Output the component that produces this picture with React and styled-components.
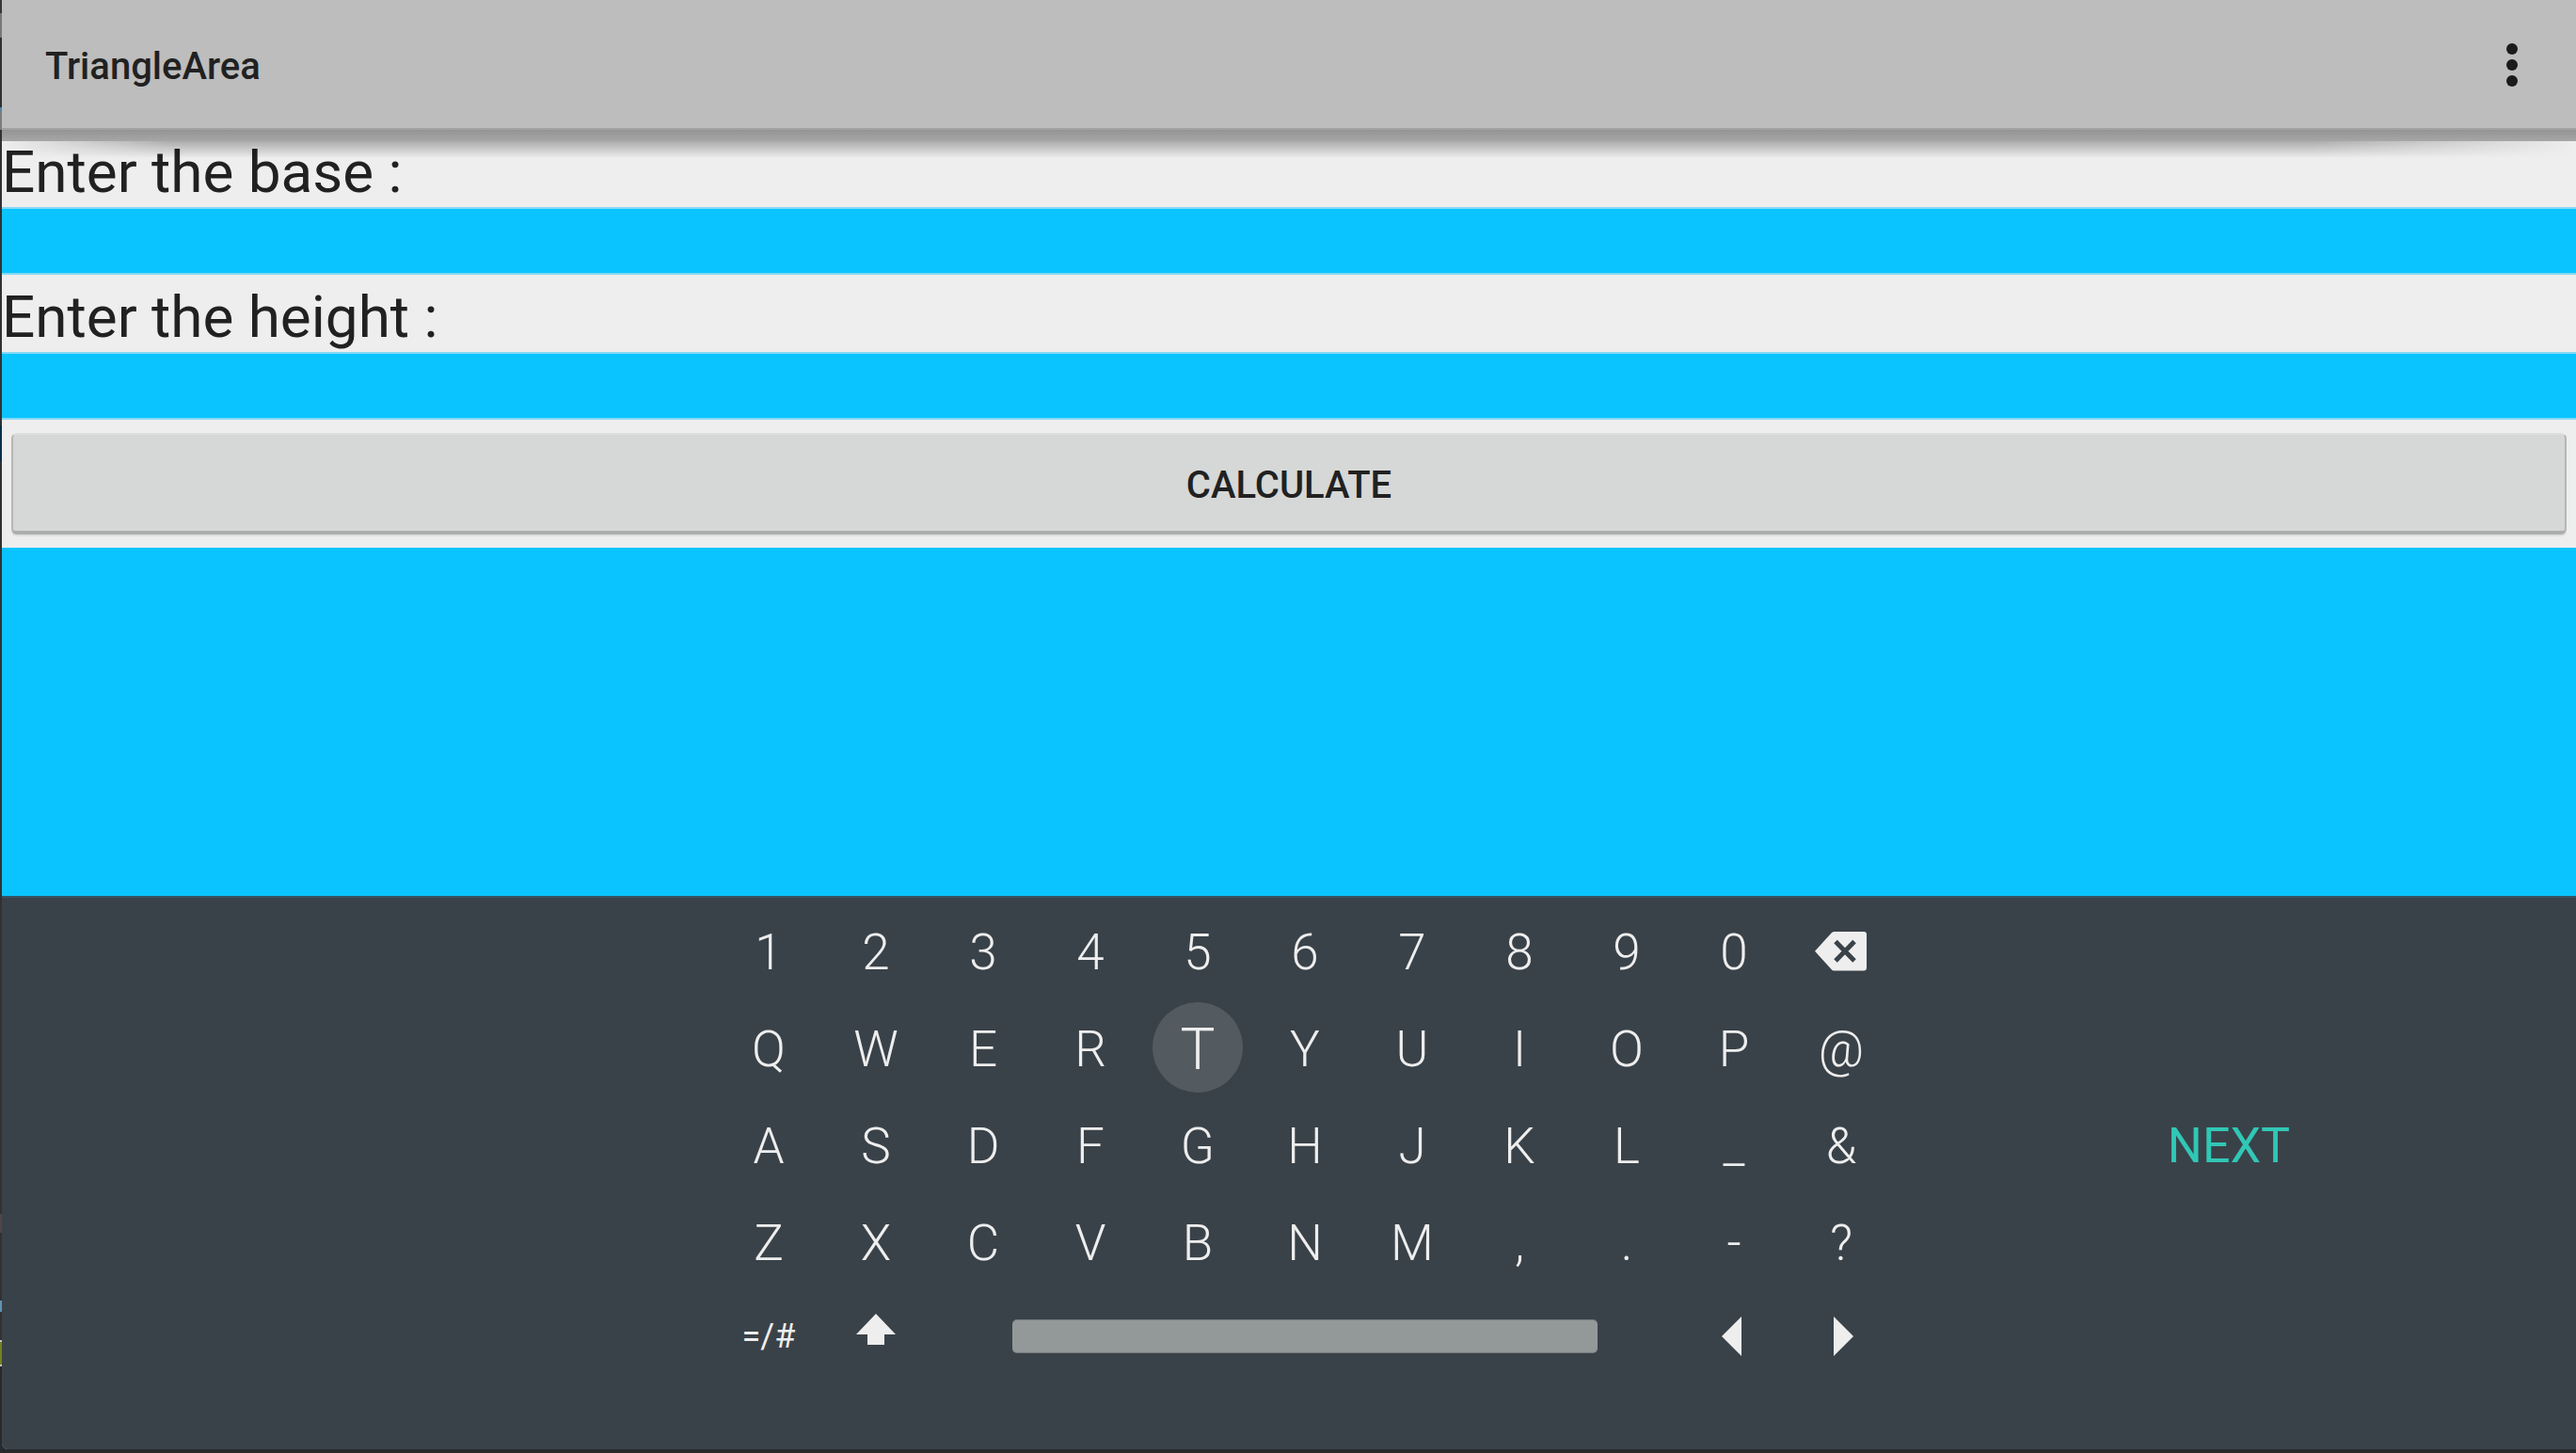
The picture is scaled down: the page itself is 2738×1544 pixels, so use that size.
import React from "react";
import styled, { createGlobalStyle, css } from "styled-components";

const GlobalStyle = createGlobalStyle`
  * { box-sizing: border-box; }
  body {
    margin: 0;
    background: #29292b;
    font-family: Roboto, "Noto Sans", sans-serif;
    color: #212121;
  }
  button, input { font: inherit; color: inherit; }
`;

/* Emulator window: the IDE behind it shows through as a 2px sliver on the left */
const Desktop = styled.div`
  min-height: 100vh;
  display: flex;
  padding: 0 0 4px 2px;
  background: linear-gradient(
    to bottom,
    #35363a 0 14px, #77787a 14px 40px, #303134 40px 114px, #4c87a6 114px 118px,
    #7b7c7e 118px 138px, #303134 138px 452px, #03304f 452px 490px,
    #303134 490px 1290px, #4d4545 1290px 1310px, #303134 1310px 1382px,
    #5f93b4 1382px 1394px, #303134 1394px 1424px, #c4c6c0 1424px 1426px,
    #75821f 1426px 1450px, #c4c6c0 1450px 1452px, #29292b 1452px
  );
`;

const Screen = styled.main`
  flex: 1;
  display: flex;
  flex-direction: column;
  background: #0ac4ff;
  border-radius: 0 0 0 6px;
  overflow: hidden;
`;

const AppBar = styled.header`
  position: relative;
  display: flex;
  align-items: center;
  justify-content: space-between;
  height: 138px;
  padding: 2px 44px 0 46px;
  background: #bdbdbd;
  border-bottom: 2px solid #a3a3a3;

  &::before,
  &::after {
    content: "";
    position: absolute;
    left: 0;
    right: 0;
    pointer-events: none;
  }
  &::before {
    top: calc(100% + 2px);
    height: 12px;
    background: linear-gradient(rgba(0, 0, 0, 0.38), rgba(0, 0, 0, 0.3));
  }
  &::after {
    top: calc(100% + 14px);
    height: 18px;
    background: linear-gradient(rgba(0, 0, 0, 0.28), rgba(0, 0, 0, 0));
    mask-image: linear-gradient(to right, transparent, #000 180px, #000 calc(100% - 280px), transparent);
  }
`;

const Title = styled.h1`
  margin: 0;
  padding-top: 4px;
  font-size: 40px;
  line-height: 48px;
  font-weight: 500;
`;

const MenuButton = styled.button`
  display: flex;
  align-items: center;
  justify-content: center;
  width: 48px;
  height: 64px;
  padding: 0;
  border: 0;
  background: none;
`;

const Form = styled.form`
  display: flex;
  flex-direction: column;
  background: #eeeeee;
`;

const FieldLabel = styled.label`
  padding-top: 8px;
  font-size: 62px;
  line-height: 74px;
`;

const Field = styled.input`
  width: 100%;
  height: 72px;
  padding: 0;
  border: solid #85d9f5;
  border-width: 2px 0;
  border-radius: 0;
  outline: 0;
  background: #0ac4ff;
`;

const Actions = styled.div`
  display: flex;
  padding: 14px 10px;
`;

const CalculateButton = styled.button`
  flex: 1;
  height: 108px;
  padding: 4px 0 0;
  border: 2px solid #b5b7b6;
  border-top-color: #dededf;
  border-bottom: 4px solid #acadac;
  border-radius: 6px;
  background: #d6d8d7;
  box-shadow: 0 2px 0 #dededf;
  font-size: 40px;
  font-weight: 500;
`;

const Output = styled.output`
  flex: 1;
`;

const Keyboard = styled.section`
  display: grid;
  grid-template-columns: 1fr auto 1fr;
  align-items: start;
  padding: 6px 0 72px 34px;
  border-top: 2px solid #365565;
  background: #3a4249;
  color: #eeeeee;
`;

const Keys = styled.div`
  grid-column: 2;
  display: grid;
  grid-template-columns: repeat(11, 114px);
  grid-template-rows: repeat(4, 103px) 96px;
`;

const Key = styled.button`
  display: flex;
  align-items: center;
  justify-content: center;
  padding: 0;
  border: 0;
  background: none;
  font-size: 53px;
  line-height: 62px;
  font-weight: 300;
  grid-column: span ${(p) => p.$span || 1};

  ${(p) =>
    p.$small &&
    css`
      font-size: 36px;
      font-weight: 400;
    `}
`;

const Focused = styled.span`
  display: flex;
  align-items: center;
  justify-content: center;
  width: 96px;
  height: 96px;
  margin-bottom: 4px;
  padding-top: 4px;
  border-radius: 50%;
  background: #535a60;
  font-size: 62px;
`;

const SpaceBar = styled.span`
  width: 622px;
  height: 36px;
  border-radius: 5px;
  background: #939899;
  border: solid #757b7f;
  border-width: 1px 0;
`;

const NextButton = styled.button`
  grid-column: 3;
  align-self: start;
  justify-self: center;
  margin: 206px 14px 0 0;
  height: 103px;
  padding: 0;
  border: 0;
  background: none;
  color: #31c7b5;
  font-size: 52px;
`;

const Icon = ({ w, h, children }) => (
  <svg width={w} height={h} viewBox={`0 0 ${w} ${h}`} fill="#eeeeee" aria-hidden="true">
    {children}
  </svg>
);

const Backspace = () => (
  <Icon w={56} h={44}>
    <path d="M17.500 1.500Q18.500 0 20.500 0H52Q55 0 55 3V38Q55 41.500 52 41.500H20.500Q18.500 41.500 17.500 40L0 20.800Z" />
    <path d="M22 10.500L42 31M42 10.500L22 31" stroke="#3a4249" strokeWidth="5" />
  </Icon>
);

const Shift = () => (
  <Icon w={42} h={48}>
    <path d="M21 0L42 22H30V33H12V22H0Z" />
  </Icon>
);

const ROWS = ["1234567890", "QWERTYUIOP@", "ASDFGHJKL_&", "ZXCVBNM,.-?"];

export default function App() {
  return (
    <>
      <GlobalStyle />
      <Desktop>
        <Screen>
          <AppBar>
            <Title>TriangleArea</Title>
            <MenuButton type="button" aria-label="More options">
              <svg width="12" height="46" viewBox="0 0 12 46" fill="#1b1b1b" aria-hidden="true">
                <circle cx="6" cy="6" r="6" />
                <circle cx="6" cy="23" r="6" />
                <circle cx="6" cy="40" r="6" />
              </svg>
            </MenuButton>
          </AppBar>
          <Form onSubmit={(e) => e.preventDefault()}>
            <FieldLabel htmlFor="base">Enter the base :</FieldLabel>
            <Field id="base" />
            <FieldLabel htmlFor="height">Enter the height :</FieldLabel>
            <Field id="height" />
            <Actions>
              <CalculateButton type="submit">CALCULATE</CalculateButton>
            </Actions>
          </Form>
          <Output />
          <Keyboard aria-label="Keyboard">
            <Keys>
              {ROWS.map((row, i) => (
                <React.Fragment key={row}>
                  {[...row].map((c) => (
                    <Key key={c} type="button">
                      {c === "T" ? <Focused>{c}</Focused> : c}
                    </Key>
                  ))}
                  {i === 0 && (
                    <Key type="button" aria-label="Backspace">
                      <Backspace />
                    </Key>
                  )}
                </React.Fragment>
              ))}
              <Key type="button" $small>=/#</Key>
              <Key type="button" aria-label="Shift">
                <Shift />
              </Key>
              <Key type="button" aria-label="Space" $span={7}>
                <SpaceBar />
              </Key>
              <Key type="button" aria-label="Move left">
                <Icon w={26} h={42}>
                  <path d="M0 21L21 0V42Z" />
                </Icon>
              </Key>
              <Key type="button" aria-label="Move right">
                <Icon w={26} h={42}>
                  <path d="M26 21L5 0V42Z" />
                </Icon>
              </Key>
            </Keys>
            <NextButton type="button">NEXT</NextButton>
          </Keyboard>
        </Screen>
      </Desktop>
    </>
  );
}
